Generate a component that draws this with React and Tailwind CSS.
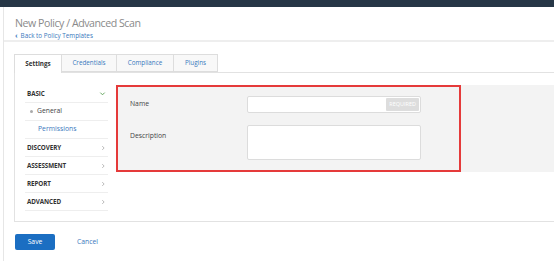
import React from "react";

const tabs = ["Settings", "Credentials", "Compliance", "Plugins"];
const tabWidths = ["w-[48px]", "w-[55px]", "w-[57px]", "w-[44px]"];

const Chevron = ({ down, className }) => (
  <svg viewBox="0 0 8 8" className={className}>
    <path
      d={down ? "M1.5 3 L4 5.5 L6.5 3" : "M3 1.5 L5.5 4 L3 6.5"}
      fill="none"
      stroke="currentColor"
      strokeWidth="1.1"
    />
  </svg>
);

const App = () => {
  const sections = ["DISCOVERY", "ASSESSMENT", "REPORT", "ADVANCED"];

  return (
    <div className="w-[554px] h-[261px] overflow-hidden bg-white font-['Open_Sans',sans-serif]">
      <div className="h-[7px] bg-[#263646]" />

      <div className="ml-[3px] border-l border-[#e6e6e6] h-[254px]">
        {/* Header */}
        <div className="h-[35px] pl-[11px] pt-[9px] border-b-2 border-[#eeeeee]">
          <h1 className="text-[10.6px] leading-[14px] text-[#8a8a8a] tracking-[-0.45px]">
            New Policy / Advanced Scan
          </h1>
          <a className="flex items-center gap-[3px] mt-[1px] text-[6.3px] leading-[9px] text-[#3a78bd]">
            <span className="font-bold text-[7px]">‹</span>
            Back to Policy Templates
          </a>
        </div>

        {/* Tabs */}
        <div className="pt-[12px] pl-[10px]">
          <div className="flex h-[18px]">
            {tabs.map((t, i) => (
              <div
                key={t}
                className={`${tabWidths[i]} flex items-center justify-center text-[6.3px] border-t border-r border-[#dddddd] ${
                  i === 0
                    ? "bg-white border-l font-bold text-[#333] -mb-px z-10"
                    : "bg-[#f8f8f8] text-[#3a78bd] border-b"
                }`}
              >
                {t}
              </div>
            ))}
          </div>

          {/* Tab content */}
          <div className="h-[150px] border-l border-t border-b border-[#e2e2e2] flex pt-[12px]">
            {/* Sidebar */}
            <div className="w-[83px] ml-[10px] text-[6.3px]">
              <div className="h-[18px] flex items-center justify-between border-b border-[#eeeeee] pl-[2px] pr-[2px]">
                <span className="font-bold text-[#333] tracking-[-0.1px]">BASIC</span>
                <Chevron down className="w-[7px] h-[7px] text-[#5fa35a]" />
              </div>
              <div className="h-[18px] flex items-center border-b border-[#eeeeee] pl-[5px] gap-[4px] text-[#444] text-[6.8px]">
                <span className="w-[3px] h-[3px] rounded-full bg-[#aaaaaa]" />
                General
              </div>
              <div className="h-[18px] flex items-center border-b border-[#eeeeee] pl-[13px] text-[#3a78bd] text-[6.8px]">
                Permissions
              </div>
              {sections.map((s) => (
                <div
                  key={s}
                  className="h-[18px] flex items-center justify-between border-b border-[#eeeeee] pl-[2px] pr-[2px]"
                >
                  <span className="font-bold text-[#333] tracking-[-0.1px]">{s}</span>
                  <Chevron className="w-[6px] h-[6px] text-[#aaaaaa]" />
                </div>
              ))}
            </div>

            {/* Panel */}
            <div className="ml-[8px] flex-1 h-[87px] bg-[#f3f3f3] flex">
              <div className="w-[345px] h-full border-2 border-[#e53a3a] pt-[9px] pl-[12px] text-[6.8px] text-[#444]">
                <div className="flex items-center h-[17px]">
                  <span className="w-[117px]">Name</span>
                  <div className="w-[174px] h-[17px] bg-white border border-[#dcdcdc] rounded-[2px] flex items-center justify-end pr-[1px]">
                    <span className="h-[13px] px-[3px] bg-[#dddddd] text-white text-[5.5px] flex items-center rounded-[1px]">
                      REQUIRED
                    </span>
                  </div>
                </div>
                <div className="flex mt-[12px]">
                  <span className="w-[117px] pt-[6px]">Description</span>
                  <div className="w-[174px] h-[35px] bg-white border border-[#dcdcdc] rounded-[2px]" />
                </div>
              </div>
            </div>
          </div>

          {/* Actions */}
          <div className="flex items-center mt-[12px] ml-[1px] gap-[22px]">
            <button className="w-[40px] h-[16px] bg-[#1b6ec2] rounded-[2px] text-white text-[6.8px]">
              Save
            </button>
            <button className="text-[6.8px] text-[#3a78bd]">Cancel</button>
          </div>
        </div>
      </div>
    </div>
  );
};

export default App;
